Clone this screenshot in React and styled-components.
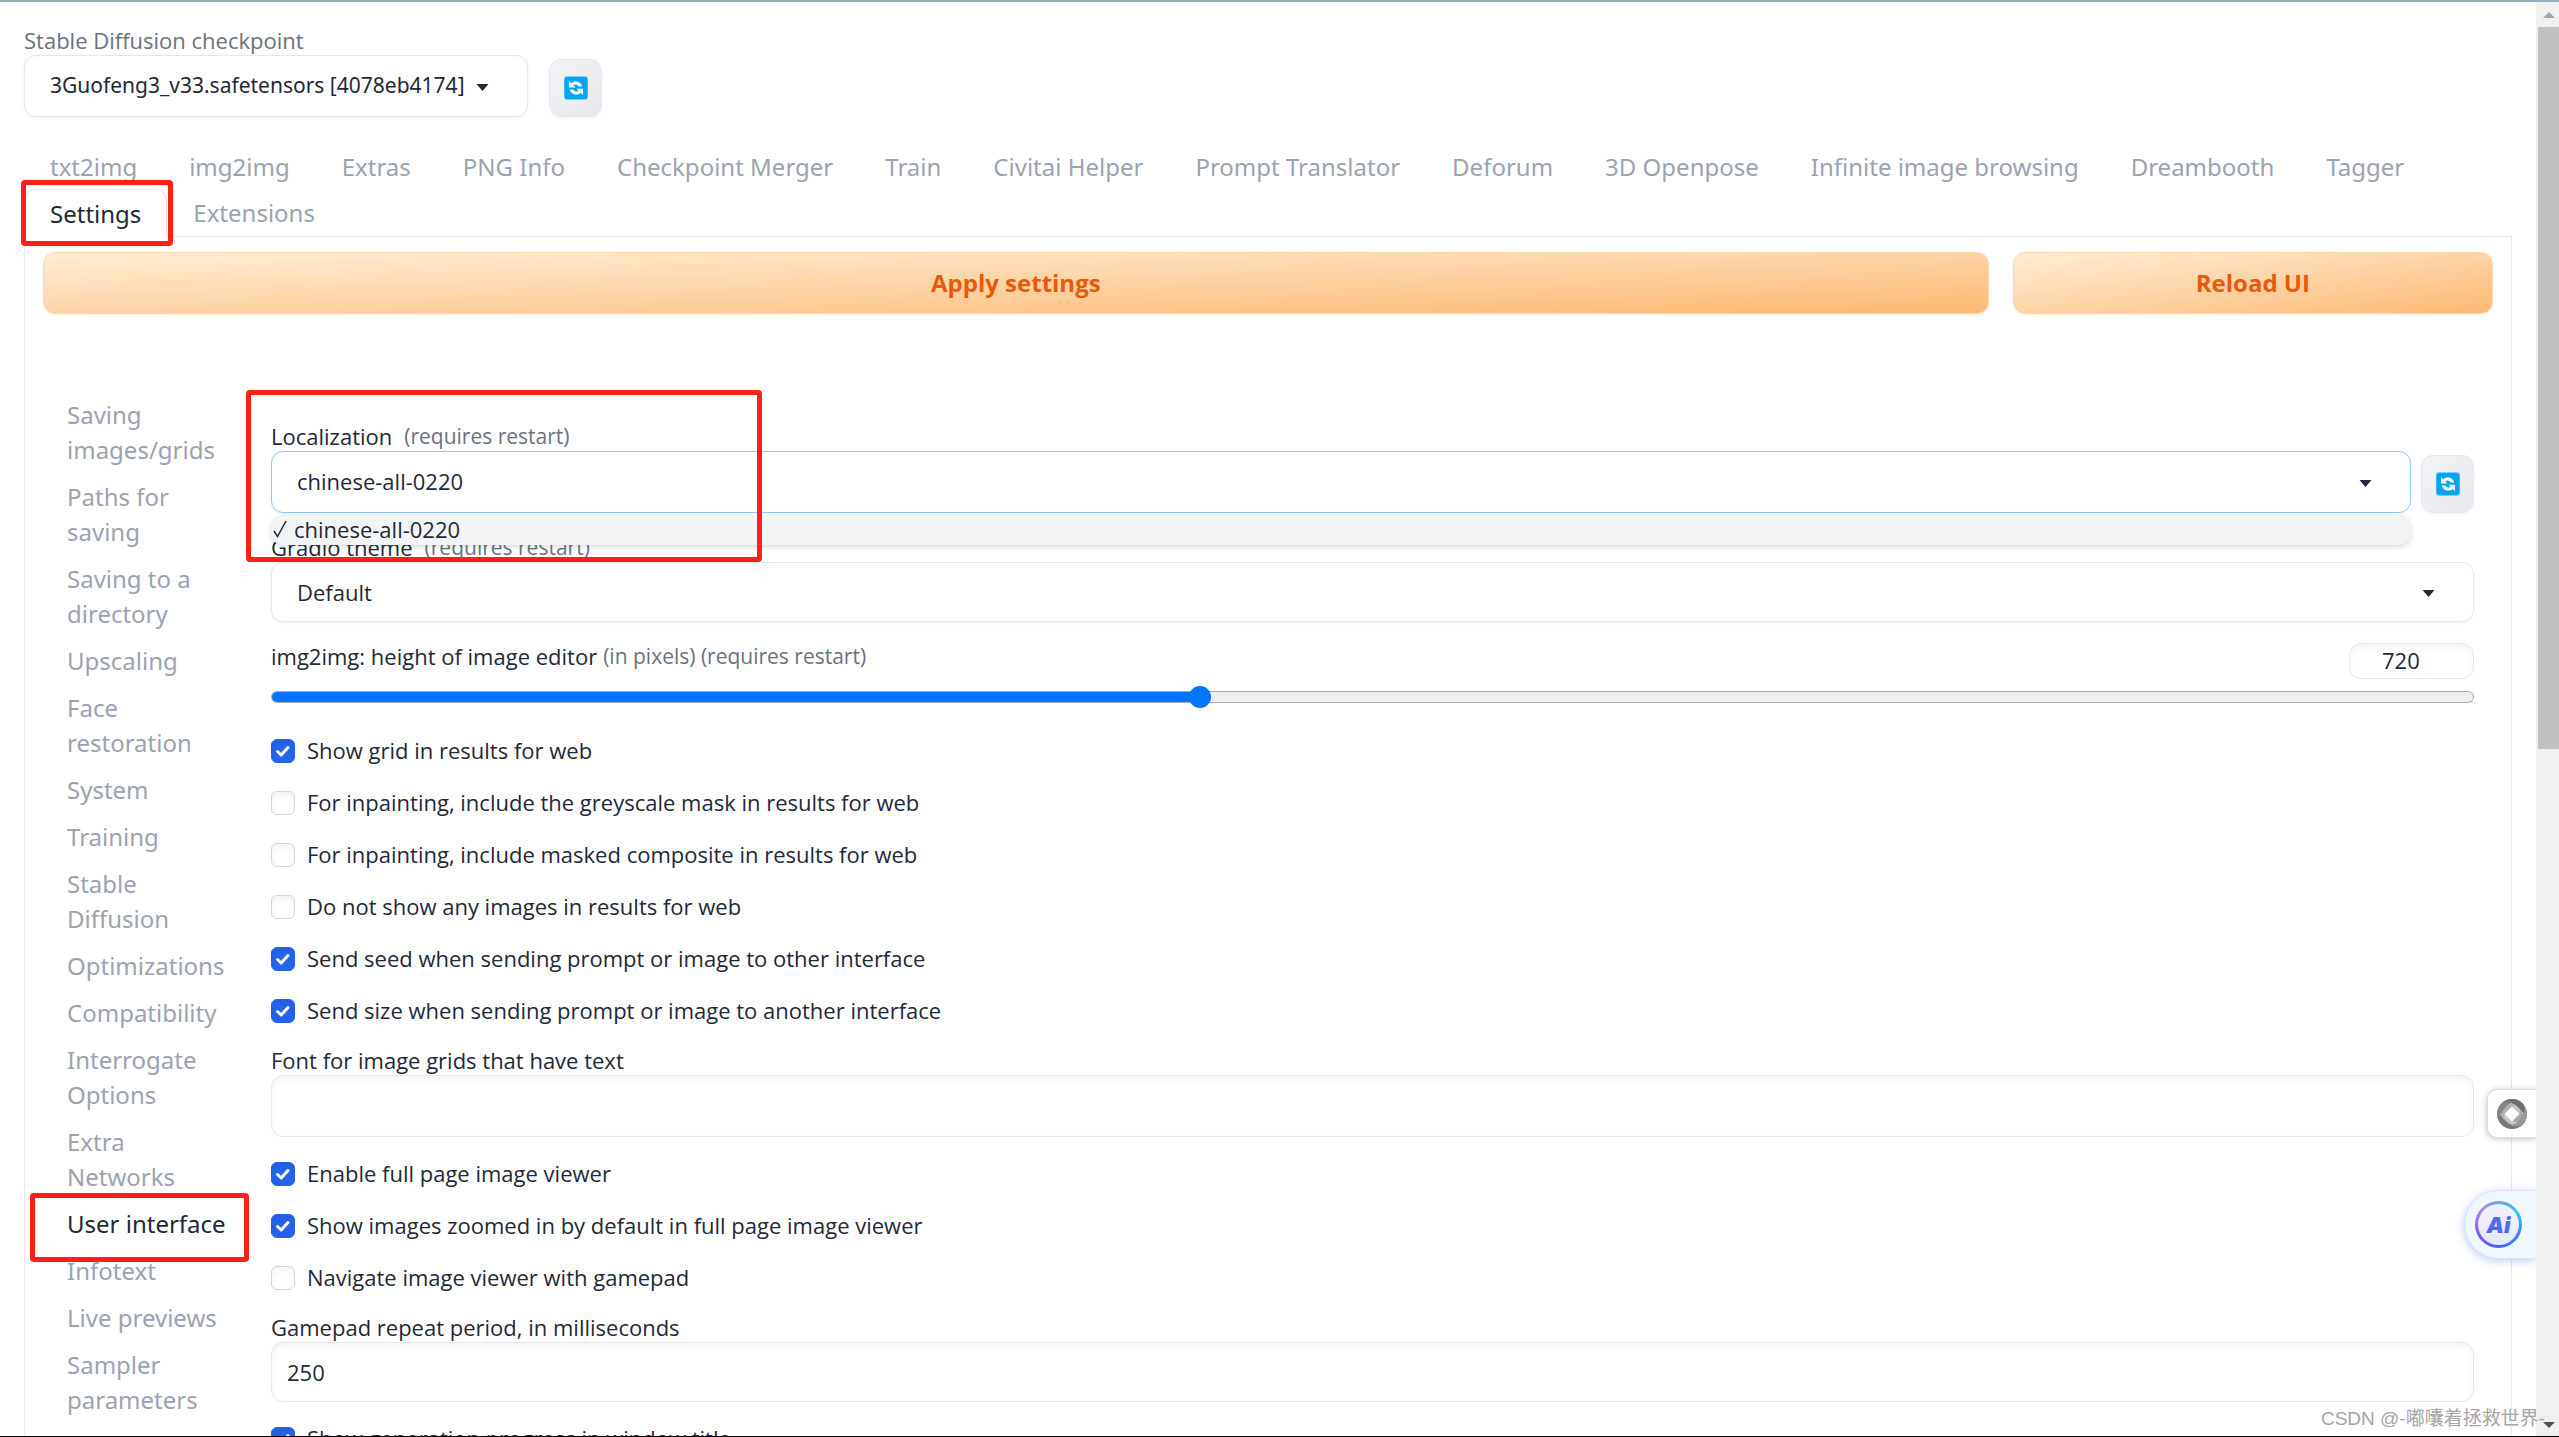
import React, { useState } from "react";
import styled, { createGlobalStyle, css } from "styled-components";

const color = {
  text: "#1f2937",
  label: "#1f2937",
  muted: "#6b7280",
  faint: "#9ca3af",
  border: "#e5e7eb",
  focus: "#93c5fd",
  accent: "#2563eb",
  mark: "#ff2015",
};

const GlobalStyle = createGlobalStyle`
  *, *::before, *::after { box-sizing: border-box; }
  body {
    margin: 0;
    background: #fff;
    color: ${color.text};
    font-family: "Open Sans", "Noto Sans", "Noto Sans CJK SC", sans-serif;
    font-size: 22px;
    line-height: 28px;
  }
  button, input, select { font: inherit; color: inherit; margin: 0; }
`;

/* ---------- window ---------- */

const Window = styled.div`
  position: relative;
  display: flex;
  height: 100vh;
  overflow: hidden;
  border-top: 2px solid #91b0b7;
  border-bottom: 1px solid #000;
`;

const Main = styled.main`
  flex: 1;
  min-width: 0;
  padding: 25px 24px 0;
`;

const Scrollbar = styled.div`
  flex: 0 0 23px;
  display: flex;
  flex-direction: column;
  align-items: center;
  padding: 10px 0 8px 2px;
  background: #f0f0f0;
`;

const ScrollThumb = styled.div`
  width: 100%;
  height: 51%;
  margin: 9px 0 auto;
  background: #c1c1c1;
`;

/* ---------- shared controls ---------- */

const Label = styled.label`
  display: flex;
  gap: ${(p) => p.$gap || 12}px;
  height: 28px;
  line-height: 26px;
  white-space: nowrap;
  color: ${(p) => (p.$muted ? color.muted : color.label)};
`;

const Info = styled.span`
  color: ${color.muted};
  font-size: 21px;
`;

const SelectBox = styled.div`
  display: flex;
  align-items: center;
  gap: 12px;
  height: ${(p) => (p.$compact ? 60 : 62)}px;
  padding: 0 38px 0 25px;
  border: 1px solid ${(p) => (p.$focused ? color.focus : color.border)};
  border-radius: 12px;
  background: #fff;
  box-shadow: 0 1px 3px rgba(0, 0, 0, 0.06);

  select {
    flex: 1;
    min-width: 0;
    padding: 0 0 ${(p) => (p.$compact ? 0 : 3)}px;
    border: 0;
    outline: 0;
    background: none;
    appearance: none;
    line-height: 30px;
    ${(p) => p.$dense && 'font-family: "Noto Sans", sans-serif; font-size: 21px;'}
  }

  svg { margin-top: 3px; }
`;

const TextInput = styled.input`
  display: block;
  width: 100%;
  height: ${(p) => (p.$compact ? 60 : 62)}px;
  padding: 0 15px;
  border: 1px solid ${color.border};
  border-radius: 12px;
  background: #fff;
  box-shadow: inset 0 3px 6px rgba(0, 0, 0, 0.05);
  outline: 0;
  appearance: textfield;

  &::-webkit-inner-spin-button { appearance: none; }
`;

const ToolButton = styled.button`
  flex: 0 0 53px;
  display: grid;
  place-items: center;
  height: 58px;
  padding: 0;
  border: 1px solid ${color.border};
  border-radius: 12px;
  background: linear-gradient(to bottom right, #f3f4f6, #e5e7eb);
  box-shadow: 0 1px 3px rgba(0, 0, 0, 0.06);
`;

const Caret = () => (
  <svg width="13" height="7" viewBox="0 0 13 7" aria-hidden="true">
    <path d="M0.500 0h12L6.500 7z" fill={color.text} />
  </svg>
);

const RefreshIcon = () => (
  <svg width="24" height="24" viewBox="0 0 24 24" aria-hidden="true">
    <rect width="24" height="24" rx="3" fill="#7fd0f7" />
    <rect x="0.5" y="1" width="23" height="22" rx="3" fill="#00a4ef" />
    <path d="M5 5.2v6.3h6.4L9.3 9.3c1.8-1.3 4.2-.8 5.3 1.3h3.6C17.300 6 11.300 3.800 7.200 7.300z" fill="#fff" />
    <path d="M19 19v-6.300h-6.400l2.100 2.200c-1.800 1.300-4.200.8-5.300-1.300H5.800c.9 4.600 6.900 6.800 11 3.300z" fill="#fff" />
  </svg>
);

/* ---------- header ---------- */

const Checkpoint = styled.div`
  display: flex;
  align-items: flex-end;
  gap: 21px;
`;

const CheckpointField = styled.div`
  width: 504px;
`;

const Tabs = styled.nav`
  display: flex;
  flex-wrap: wrap;
  margin-top: 27px;
`;

const Tab = styled.button`
  height: 46px;
  padding: 0 26px;
  border: 0;
  background: none;
  color: ${color.faint};
  font-family: "Noto Sans", sans-serif;
  font-size: 24px;
  line-height: 44px;
  white-space: nowrap;

  ${(p) =>
    p.$active &&
    css`
      height: 48px;
      margin: -1px 0 -1px;
      padding: 0 25px;
      border: 1px solid ${color.border};
      border-bottom: 0;
      border-radius: 12px 12px 0 0;
      background: #fff;
      color: ${color.text};
      z-index: 1;
    `}
`;

/* ---------- settings panel ---------- */

const Panel = styled.section`
  padding: 15px 18px 0;
  border: 1px solid ${color.border};
`;

const Actions = styled.div`
  display: grid;
  grid-template-columns: 81fr 20fr;
  gap: 24px;
`;

const PrimaryButton = styled.button`
  height: 62px;
  padding: 0;
  border: 1px solid #fed7aa;
  border-radius: 12px;
  background: linear-gradient(to bottom right, #ffedd5, #fdba74);
  box-shadow: 0 1px 3px rgba(0, 0, 0, 0.06);
  color: #ea580c;
  font-family: "Open Sans", sans-serif;
  font-size: 24px;
  font-weight: 700;
`;

const Body = styled.div`
  display: flex;
  gap: 16px;
  margin-top: 77px;
  padding-right: 19px;
`;

const SideNav = styled.nav`
  flex: 0 0 212px;
  display: flex;
  flex-direction: column;
`;

const SideItem = styled.button`
  padding: 6px 24px;
  border: 0;
  background: none;
  text-align: left;
  color: ${(p) => (p.$active ? color.text : color.faint)};
  font-family: "Noto Sans", sans-serif;
  font-size: 24px;
  line-height: 35px;
`;

const Form = styled.form`
  flex: 1;
  min-width: 0;
  display: flex;
  flex-direction: column;
  gap: 21px;
  padding-top: 32px;
`;

const FieldRow = styled.div`
  display: flex;
  align-items: flex-end;
  gap: 10px;
`;

const Field = styled.div`
  position: relative;
  flex: 1;
`;

const Options = styled.ul`
  position: absolute;
  top: 100%;
  left: 0;
  right: 0;
  z-index: 1;
  margin: 2px 0 0;
  padding: 0;
  list-style: none;
  border-radius: 12px;
  background: #f3f4f6;
  box-shadow: 0 2px 5px rgba(0, 0, 0, 0.14);
`;

const Option = styled.li`
  display: flex;
  align-items: center;
  gap: 7px;
  height: 30px;
  padding: 0 0 2px 2px;
`;

const SliderField = styled.div`
  display: flex;
  flex-direction: column;
  gap: 6px;
  padding-bottom: 5px;
`;

const SliderHead = styled.div`
  display: flex;
  justify-content: space-between;
`;

const NumberInput = styled(TextInput)`
  width: 125px;
  height: 36px;
  padding: 0 0 2px 32px;
`;

const Range = styled.input`
  display: block;
  width: 100%;
  height: 24px;
  appearance: none;
  background: none;

  &::-webkit-slider-runnable-track {
    height: 12px;
    border: 1px solid rgba(90, 90, 90, 0.45);
    border-radius: 6px;
    background: linear-gradient(#0075ff, #0075ff) 0 0 / var(--filled) 100% no-repeat padding-box, #efefef;
  }
  &::-webkit-slider-thumb {
    appearance: none;
    width: 22px;
    height: 22px;
    margin-top: -6px;
    border-radius: 50%;
    background: #0075ff;
  }
`;

const CheckRow = styled.label`
  display: flex;
  align-items: center;
  gap: 12px;
  height: 31px;
  white-space: nowrap;

  span { padding-bottom: 1px; }
`;

const CheckMark = styled.span`
  position: relative;
  display: grid;
  width: 24px;
  height: 24px;

  input {
    width: 24px;
    height: 24px;
    border: 1px solid #d1d5db;
    border-radius: 6px;
    background: #fff;
    box-shadow: inset 0 3px 6px rgba(0, 0, 0, 0.05);
    appearance: none;
  }
  input:checked {
    border-color: ${color.accent};
    background: ${color.accent};
  }
  svg {
    position: absolute;
    inset: 0;
    pointer-events: none;
  }
`;

/* ---------- overlays ---------- */

const Highlight = styled.div`
  position: absolute;
  z-index: 2;
  left: ${(p) => p.$x}px;
  top: ${(p) => p.$y}px;
  width: ${(p) => p.$w}px;
  height: ${(p) => p.$h}px;
  border: 5px solid ${color.mark};
  border-radius: 4px;
  pointer-events: none;
`;

const Floating = styled.button`
  position: absolute;
  right: 23px;
  display: flex;
  align-items: center;
  padding: 0;
`;

const LensButton = styled(Floating)`
  top: 1087px;
  width: 49px;
  height: 49px;
  padding-left: 9px;
  border: 1px solid #dcdcdc;
  border-right: 0;
  border-radius: 10px 0 0 10px;
  background: #fff;
  box-shadow: 0 1px 6px rgba(0, 0, 0, 0.25);
  clip-path: inset(-10px 0 -10px -10px);
`;

const AiButton = styled(Floating)`
  top: 1188px;
  width: 72px;
  height: 69px;
  padding-left: 10px;
  border: 1px solid #d3e5ff;
  border-right: 0;
  border-radius: 35px 0 0 35px;
  background: #f0f7ff;
  box-shadow: 0 2px 8px rgba(90, 100, 255, 0.35);
  clip-path: inset(-12px 0 -12px -12px);
`;

const AiRing = styled.span`
  display: grid;
  place-items: center;
  width: 47px;
  height: 47px;
  border: 3px solid transparent;
  border-radius: 50%;
  background:
    linear-gradient(#f1f1ff, #e6e8fc) padding-box,
    conic-gradient(#6ba0ea, #2bc8f5 60deg, #3a8af5 110deg, #4a63f0 180deg, #7d5cf5 250deg, #b08af0 315deg, #6ba0ea) border-box;
  color: #4c6bf3;
  font-family: Inter, sans-serif;
  font-size: 22px;
  font-style: italic;
  font-weight: 900;
  line-height: 24px;
`;

const Watermark = styled.div`
  position: absolute;
  right: 14px;
  bottom: 3px;
  z-index: 2;
  color: #a6a6a6;
  font-family: "Liberation Sans", "Noto Sans CJK SC", sans-serif;
  font-size: 19px;
  line-height: 28px;
  white-space: nowrap;
  text-shadow: 1px 1px 0 #fff;
`;

const LensIcon = () => (
  <svg width="30" height="30" viewBox="0 0 30 30" aria-hidden="true">
    <circle cx="15" cy="15" r="15" fill="#8a8a8a" />
    <path d="M4 5A15 15 0 0 1 27 6L29 17L18 6Q11 1 4 5z" fill="#6d6d6d" />
    <path d="M26 5A15 15 0 0 1 23 28L15 29L24 19Q30 12 26 5z" fill="#999" />
    <path d="M26 25A15 15 0 0 1 4 25L1 15L12 25Q19 30 26 25z" fill="#777" />
    <path d="M4 25A15 15 0 0 1 5 4L14 1L6 11Q0 18 4 25z" fill="#858585" />
    <path d="M8 9Q14 1 21 8L27 15L22 16L15 8Q11 6 8 9z" fill="#c4c4c4" />
    <path d="M22 9Q29 15 22 21L15 27L14 22L22 15Q24 12 22 9z" fill="#a9a9a9" />
    <path d="M22 22Q15 29 9 22L3 15L8 14L15 22Q19 24 22 22z" fill="#c9c9c9" />
    <path d="M8 22Q1 15 8 9L15 3L16 8L8 15Q6 19 8 22z" fill="#b3b3b3" />
    <path d="M15 7.500L22.500 15L15 22.500L7.500 15z" fill="#fff" />
  </svg>
);

/* ---------- content ---------- */

const tabs = [
  "txt2img", "img2img", "Extras", "PNG Info", "Checkpoint Merger", "Train", "Civitai Helper",
  "Prompt Translator", "Deforum", "3D Openpose", "Infinite image browsing", "Dreambooth",
  "Tagger", "Settings", "Extensions",
];

const sections = [
  "Saving images/grids", "Paths for saving", "Saving to a directory", "Upscaling",
  "Face restoration", "System", "Training", "Stable Diffusion", "Optimizations",
  "Compatibility", "Interrogate Options", "Extra Networks", "User interface", "Infotext",
  "Live previews", "Sampler parameters",
];

const resultOptions = [
  ["Show grid in results for web", true],
  ["For inpainting, include the greyscale mask in results for web", false],
  ["For inpainting, include masked composite in results for web", false],
  ["Do not show any images in results for web", false],
  ["Send seed when sending prompt or image to other interface", true],
  ["Send size when sending prompt or image to another interface", true],
];

const viewerOptions = [
  ["Enable full page image viewer", true],
  ["Show images zoomed in by default in full page image viewer", true],
  ["Navigate image viewer with gamepad", false],
];

function Check({ text, initial }) {
  const [checked, setChecked] = useState(initial);
  return (
    <CheckRow>
      <CheckMark>
        <input type="checkbox" checked={checked} onChange={(e) => setChecked(e.target.checked)} />
        {checked && (
          <svg width="24" height="24" viewBox="0 0 24 24" aria-hidden="true">
            <path d="M6.500 12.500l3.700 3.500L17 8.500" fill="none" stroke="#fff" strokeWidth="3" strokeLinecap="round" strokeLinejoin="round" />
          </svg>
        )}
      </CheckMark>
      <span>{text}</span>
    </CheckRow>
  );
}

function HeightSlider() {
  const min = 80;
  const max = 1600;
  const [value, setValue] = useState(720);
  const update = (e) => setValue(Number(e.target.value));
  return (
    <SliderField>
      <SliderHead>
        <Label htmlFor="editor-height" $gap={6}>
          img2img: height of image editor <Info>(in pixels) (requires restart)</Info>
        </Label>
        <NumberInput type="number" aria-label="Editor height in pixels" value={value} onChange={update} />
      </SliderHead>
      <Range
        id="editor-height"
        type="range"
        min={min}
        max={max}
        step={16}
        value={value}
        onChange={update}
        style={{ "--filled": `${((value - min) / (max - min)) * 100}%` }}
      />
    </SliderField>
  );
}

export default function App() {
  const [tab, setTab] = useState("Settings");
  const [section, setSection] = useState("User interface");

  return (
    <Window>
      <GlobalStyle />
      <Main>
        <Checkpoint>
          <CheckpointField>
            <Label htmlFor="checkpoint" $muted>Stable Diffusion checkpoint</Label>
            <SelectBox $dense>
              <select id="checkpoint">
                <option>3Guofeng3_v33.safetensors [4078eb4174]</option>
              </select>
              <Caret />
            </SelectBox>
          </CheckpointField>
          <ToolButton type="button" aria-label="Refresh checkpoints"><RefreshIcon /></ToolButton>
        </Checkpoint>

        <Tabs>
          {tabs.map((name) => (
            <Tab key={name} type="button" $active={name === tab} onClick={() => setTab(name)}>
              {name}
            </Tab>
          ))}
        </Tabs>

        <Panel>
          <Actions>
            <PrimaryButton type="button">Apply settings</PrimaryButton>
            <PrimaryButton type="button">Reload UI</PrimaryButton>
          </Actions>

          <Body>
            <SideNav>
              {sections.map((name) => (
                <SideItem key={name} type="button" $active={name === section} onClick={() => setSection(name)}>
                  {name}
                </SideItem>
              ))}
            </SideNav>

            <Form>
              <FieldRow>
                <Field>
                  <Label htmlFor="localization">Localization <Info>(requires restart)</Info></Label>
                  <SelectBox $focused>
                    <select id="localization">
                      <option>chinese-all-0220</option>
                    </select>
                    <Caret />
                  </SelectBox>
                  <Options role="listbox">
                    <Option role="option" aria-selected="true">
                      <svg width="14" height="18" viewBox="0 0 14 18" aria-hidden="true">
                        <path d="M1 11l3.500 5.500L13 1" fill="none" stroke={color.text} strokeWidth="1.500" />
                      </svg>
                      chinese-all-0220
                    </Option>
                  </Options>
                </Field>
                <ToolButton type="button" aria-label="Refresh localizations"><RefreshIcon /></ToolButton>
              </FieldRow>

              <div>
                <Label htmlFor="theme">Gradio theme <Info>(requires restart)</Info></Label>
                <SelectBox $compact>
                  <select id="theme">
                    <option>Default</option>
                  </select>
                  <Caret />
                </SelectBox>
              </div>

              <HeightSlider />

              {resultOptions.map(([text, on]) => <Check key={text} text={text} initial={on} />)}

              <div>
                <Label htmlFor="grid-font">Font for image grids that have text</Label>
                <TextInput id="grid-font" type="text" />
              </div>

              {viewerOptions.map(([text, on]) => <Check key={text} text={text} initial={on} />)}

              <div>
                <Label htmlFor="gamepad">Gamepad repeat period, in milliseconds</Label>
                <TextInput id="gamepad" type="number" defaultValue={250} $compact />
              </div>

              <Check text="Show generation progress in window title" initial />
            </Form>
          </Body>
        </Panel>
      </Main>

      <Scrollbar>
        <svg width="12" height="6" viewBox="0 0 12 6" aria-hidden="true"><path d="M6 0l6 6H0z" fill="#a3a3a3" /></svg>
        <ScrollThumb />
        <svg width="12" height="6" viewBox="0 0 12 6" aria-hidden="true"><path d="M0 0h12L6 6z" fill="#505050" /></svg>
      </Scrollbar>

      <LensButton type="button" aria-label="Image search"><LensIcon /></LensButton>
      <AiButton type="button"><AiRing>Ai</AiRing></AiButton>

      <Highlight $x={21} $y={178} $w={152} $h={66} />
      <Highlight $x={246} $y={388} $w={516} $h={172} />
      <Highlight $x={30} $y={1191} $w={219} $h={69} />
      <Watermark>CSDN @-嘟囔着拯救世界-</Watermark>
    </Window>
  );
}
